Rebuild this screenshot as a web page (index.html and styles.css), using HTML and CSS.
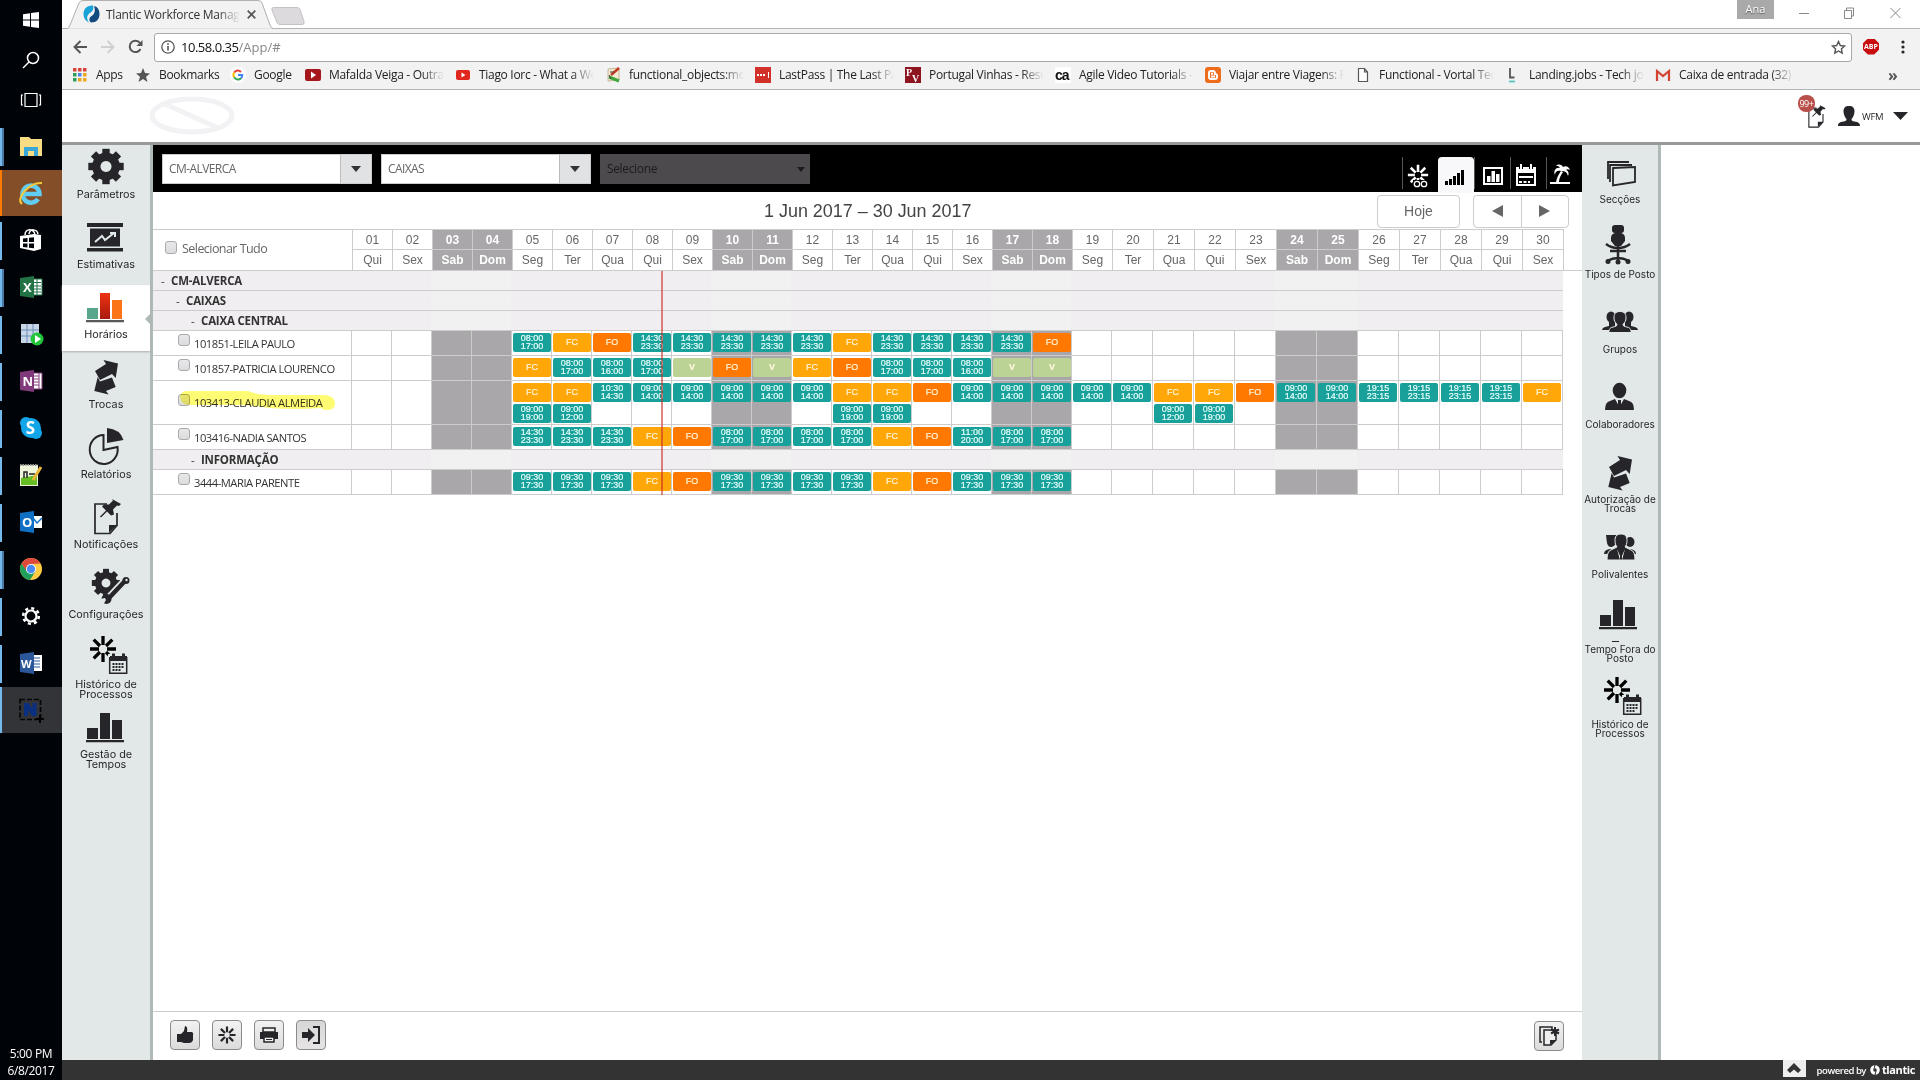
FILE: index.html
```html
<!DOCTYPE html>
<html lang="pt">
<head>
<meta charset="utf-8">
<title>Tlantic Workforce Management</title>
<link rel="stylesheet" href="styles.css">
</head>
<body>
<svg class="defs" width="0" height="0">
  <defs>
    <g id="gear"><path fill-rule="evenodd" d="M0-14a14 14 0 1 0 .01 0zM0-5.500a5.500 5.500 0 1 1-.01 0z"/><g id="teeth"><rect x="-3.700" y="-17.700" width="7.400" height="6"/><rect x="-3.700" y="11.700" width="7.400" height="6"/><rect x="-17.700" y="-3.700" width="6" height="7.400"/><rect x="11.700" y="-3.700" width="6" height="7.400"/></g><use href="#teeth" transform="rotate(45)"/></g>
    <g id="burst" stroke="currentColor" stroke-width="3.300"><path d="M0-4V-13M0 4V13M-4 0H-13M4 0H13M-3-3L-9.300-9.300M3-3L9.300-9.300M-3 3L-9.300 9.300M3 3L9.300 9.300"/></g>
    <g id="swap"><path d="M19.500 5 34 8.500 31.700 23 28 19 16 25 11 16 22 9zM10.300 36 13.700 22 16 26.500 28 22.500 31.700 32 22 36 24.600 39.500z"/></g>
    <g id="bars"><path d="M3 23h11v11H3zM16 8h10v26H16zM28 15h10v19H28zM2 35h38v2.300H2z"/></g>
    <g id="history"><use href="#burst" x="19" y="14" color="#000"/><path fill="#e2e8e8" d="M24 19h20v21H24z"/><path d="M26 21h17v5H26zM28 18.500h3v4h-3zM38 18.500h3v4h-3z"/><path fill="none" stroke="currentColor" stroke-width="1.500" d="M25.700 22.700h17v15.500h-17z"/><path stroke="currentColor" stroke-width="2.200" stroke-dasharray="2 1" d="M28.500 29h12M28.500 32h12M28.500 35h9"/></g>
    <g id="note"><path fill="none" stroke="currentColor" stroke-width="1.700" d="M23 9H11v29.500h15l7-8V18"/><path d="M25 38v-8h8zM28 4l9 5-2 2-2-.5-4 4 1 5-3 1-4-4-6 6-1-1 6-6-4-4 2-2 5 0 4-4z"/></g>
    <g id="caret"><path d="M0 0h10l-5 6z"/></g>
  </defs>
</svg>

<div class="desktop">
  <aside class="taskbar">
    <div class="sys"><svg width="18" height="18" viewBox="0 0 18 18" fill="#fff"><path d="M1 3.300 8 2.300V8.500H1zM9 2.100 17 1V8.500H9zM1 9.500h7v6.200L1 14.700zM9 9.500h8V17L9 15.900z"/></svg></div>
    <div class="sys"><svg width="18" height="18" viewBox="0 0 18 18" fill="none" stroke="#fff" stroke-width="1.500"><circle cx="11" cy="7" r="5.500"/><path d="M7 11 1 17"/></svg></div>
    <div class="sys"><svg width="22" height="18" viewBox="0 0 22 18" fill="none" stroke="#fff" stroke-width="1.200"><path d="M5 2.500h12v13H5zM3 4H1.500v10H3M19 4h1.500v10H19"/></svg></div>
    <div class="tasks">
      <div class="task multi"><svg width="28" height="28" viewBox="0 0 28 28"><path fill="#f8dc84" d="M3 5h9l2 2h11v17H3z"/><path fill="#3ba7d8" d="M7 24v-9h14v9h-4v-5h-6v5z"/></svg></div>
      <div class="task alert"><svg width="28" height="28" viewBox="0 0 28 28"><path fill="none" stroke="#62cdf3" stroke-width="4.500" d="M6 15h16.500A8.500 8.500 0 1 0 21 20"/><path fill="none" stroke="#f5c73b" stroke-width="2" d="M5 25C-2 20 12 3 25 4"/></svg></div>
      <div class="task"><svg width="28" height="28" viewBox="0 0 28 28"><path fill="#fff" d="M3 10l14-2 7 1v14l-7 2L3 22z"/><path fill="none" stroke="#fff" stroke-width="1.500" d="M8 9c0-7 9-7 10 0M12 8c1-6 8-5 9 0"/><path fill="#000308" d="M6 12.500l4.500-.5v4H6zM12 11.800l5-.5v4.700h-5zM6 17.500h4.500v4L6 21zM12 17.500h5v4.800l-5-.6z"/></svg></div>
      <div class="task multi"><svg class="office" width="28" height="28" viewBox="0 0 28 28"><path fill="#fff" stroke="#217346" d="M14 6h11v16H14z"/><path stroke="#217346" d="M15 9.500h9M15 13h9M15 16h9M15 19h9M20 6v16"/><path fill="#217346" d="M3 5l14-2v22L3 23z"/><text x="6" y="19">X</text></svg></div>
      <div class="task"><svg width="28" height="28" viewBox="0 0 28 28"><path fill="#c8d7e8" d="M4 4h18v19H4z"/><path stroke="#6c8db5" d="M4 10h18M4 16h18M10 4v19M16 4v19"/><circle cx="20" cy="19" r="6.500" fill="#22c43a"/><path fill="#fff" d="M18 15l6 4-6 4z"/></svg></div>
      <div class="task"><svg class="office" width="28" height="28" viewBox="0 0 28 28"><path fill="#fff" stroke="#80397b" d="M14 6h11v16H14z"/><path stroke="#80397b" d="M15 9h7M15 12h7M15 15h7M15 18h7M22 6v16"/><path fill="#80397b" d="M3 5l14-2v22L3 23z"/><text x="5.500" y="19">N</text></svg></div>
      <div class="task"><svg class="skype" width="28" height="28" viewBox="0 0 28 28"><circle cx="14" cy="14" r="10" fill="#12a5e8"/><circle cx="9" cy="9" r="6" fill="#12a5e8"/><circle cx="19" cy="19" r="6" fill="#12a5e8"/><text x="8.700" y="20">S</text></svg></div>
      <div class="task"><svg width="28" height="28" viewBox="0 0 28 28"><path fill="#eef5da" d="M3 4h18v21H3z"/><path fill="#66bd24" d="M4 17l16-3v10H4z"/><path fill="none" stroke="#222" stroke-width="1.500" d="M7 17v-6h3v6M12 13h6"/><path stroke="#999" stroke-dasharray="1.500 1" stroke-width="2" d="M3 4h18"/><path stroke="#e8b53a" stroke-width="3" d="M24 6l-8 13"/></svg></div>
      <div class="task"><svg class="office" width="28" height="28" viewBox="0 0 28 28"><path fill="#fff" d="M14 8h11v12H14z"/><path fill="none" stroke="#0f70c5" stroke-width="1.500" d="M16 10l4 5 5-5"/><path fill="#0f70c5" d="M3 5l14-2v22L3 23z"/><text x="5" y="19">O</text></svg></div>
      <div class="task multi"><svg width="28" height="28" viewBox="0 0 28 28"><circle cx="14" cy="14" r="11" fill="#fc4"/><path fill="#df4a3c" d="M4.500 8.500A11 11 0 0 1 23.500 8.500L14 9 9 16z"/><path fill="#20a05b" d="M4.500 8.500A11 11 0 0 0 13 25L18.500 16.500 9.500 16z"/><circle cx="14" cy="14" r="5" fill="#fff"/><circle cx="14" cy="14" r="4.200" fill="#4c8bf5"/></svg></div>
      <div class="task"><svg width="28" height="28" viewBox="0 0 28 28" fill="none" stroke="#fff"><circle cx="14" cy="14" r="5.500" stroke-width="2.200"/><circle cx="14" cy="14" r="7.800" stroke-width="2.600" stroke-dasharray="3.060 3.060"/></svg></div>
      <div class="task"><svg class="office" width="28" height="28" viewBox="0 0 28 28"><path fill="#fff" d="M14 6h11v16H14z"/><path stroke="#2b579a" d="M15 9h8M15 12h8M15 15h8M15 18h8"/><path fill="#2b579a" d="M3 5l14-2v22L3 23z"/><text x="4" y="19" class="small">W</text></svg></div>
      <div class="task current"><svg width="28" height="28" viewBox="0 0 28 28"><path fill="none" stroke="#050505" stroke-width="1.700" stroke-dasharray="5 2" d="M3 3.500h20.500v20H3z"/><path fill="#0b2f80" d="M7 20V7h4.500l4 6V7h4v13H15l-4-6v6z"/><path stroke="#000" stroke-width="2" d="M23 19v8M19 23h8"/></svg></div>
    </div>
    <div class="clock"><span>5:00 PM</span><span>6/8/2017</span></div>
  </aside>

  <div class="window">
    <div class="tabstrip">
      <div class="tab">
        <svg class="tab-shape" width="212" height="30" viewBox="0 0 212 30"><path fill="#f2f2f2" stroke="#b0b0b0" d="M0 28.500h5.500Q7 28 8 25L17 3Q18 .5 21 .5H196Q199 .5 200 3L208 25Q209 28 211 28.500"/><path stroke="#f2f2f2" stroke-width="2" d="M6 29.500h204"/></svg>
        <svg class="favicon" width="17" height="18" viewBox="0 0 17 18"><path fill="#17a3d9" d="M10 .5C4 0 .5 4 .5 9c0 4 2 7 5.500 8.500C3 13 4 10 7 8c3-2 4-4 3-7.500z"/><path fill="#124a80" d="M11 1c4 1 5.500 4 5.500 8 0 5-3 8.500-8.500 8.500-2.500-2-2-5 .5-6.500C12 9 12.500 5 11 1z"/></svg>
        <span class="tab-title">Tlantic Workforce Manag</span>
        <svg class="tab-x" width="9" height="9" viewBox="0 0 9 9"><path stroke="#555" stroke-width="1.700" d="M.7.700l7.600 7.600M8.300.700.7 8.300"/></svg>
      </div>
      <svg class="newtab" width="36" height="19" viewBox="0 0 36 19"><path fill="#dcdadc" stroke="#c4c2c4" d="M3 .5h23q2 0 3 2l4 12q1 3-2 3H9q-2 0-3-2L1 3Q0 .5 3 .5z"/></svg>
      <span class="user-badge">Ana</span>
      <svg class="winbtns" width="104" height="12" viewBox="0 0 104 12" fill="none" stroke="#888"><path d="M1 6.500h10M46.500 3.500h7v8h-7zM48.500 3V1h7v8h-2M92.500 1l10 10M102.500 1l-10 10"/></svg>
    </div>
    <div class="toolbar">
      <svg width="14" height="14" viewBox="0 0 14 14" fill="none" stroke="#555" stroke-width="1.900"><path d="M14 7H1.500M7.500 1 1.500 7l6 6"/></svg>
      <svg class="fwd" width="14" height="14" viewBox="0 0 14 14" fill="none" stroke="#d0d0d0" stroke-width="1.900"><path d="M0 7h12.500M6.500 1l6 6-6 6"/></svg>
      <svg class="reload" width="15" height="15" viewBox="0 0 15 15"><path fill="none" stroke="#555" stroke-width="2" d="M12.500 10A5.700 5.700 0 1 1 12 4"/><path fill="#555" d="M14.500 1v6h-6z"/></svg>
      <div class="omnibox">
        <svg width="14" height="14" viewBox="0 0 14 14"><circle cx="7" cy="7" r="6.200" fill="none" stroke="#555" stroke-width="1.300"/><path stroke="#555" stroke-width="1.600" d="M7 6v4.500M7 3.200v1.600"/></svg>
        <span class="url">10.58.0.35<i>/App/#</i></span>
        <svg class="star" width="15" height="15" viewBox="0 0 15 15"><path fill="none" stroke="#555" stroke-width="1.400" d="M7.500 1.500l1.800 4 4.200.5-3.100 2.900.8 4.300-3.700-2.200-3.700 2.200.8-4.300L1.500 6l4.200-.5z"/></svg>
      </div>
      <span class="abp">ABP</span>
      <svg class="dots" width="4" height="14" viewBox="0 0 4 14" fill="#555"><circle cx="2" cy="2" r="1.600"/><circle cx="2" cy="7" r="1.600"/><circle cx="2" cy="12" r="1.600"/></svg>
    </div>
    <div class="bookmarks">
      <div class="bm apps"><svg width="16" height="16" viewBox="0 0 16 16"><path fill="#d9453d" d="M1 1h3.500v3.500H1zM6 1h3.500v3.500H6zM11 1h3.500v3.500H11z"/><path fill="#2e9e5b" d="M1 6h3.500v3.500H1zM1 11h3.500v3.500H1z"/><path fill="#4a86e8" d="M6 6h3.500v3.500H6z"/><path fill="#e9a820" d="M11 6h3.500v3.500H11zM6 11h3.500v3.500H6zM11 11h3.500v3.500H11z"/></svg><span>Apps</span></div>
      <div class="bm marks"><svg width="16" height="16" viewBox="0 0 16 16"><path fill="#555" d="M8 1l2 5 5 .4-4 3.400L12.500 15 8 12l-4.500 3L5 9.800 1 6.400 6 6z"/></svg><span>Bookmarks</span></div>
      <div class="bm goog"><svg width="16" height="16" viewBox="0 0 16 16" fill="none" stroke-width="2"><circle cx="8" cy="8" r="8" fill="#fff"/><path stroke="#e94335" d="M4.200 5.500A4.300 4.300 0 0 1 11 5"/><path stroke="#fbbc05" d="M4.200 10.300a4.300 4.300 0 0 1 0-4.800"/><path stroke="#34a853" d="M11 11.200a4.300 4.300 0 0 1-6.800-1"/><path stroke="#4285f4" d="M8 8h4.300a4 4 0 0 1-1.300 3.200"/></svg><span>Google</span></div>
      <div class="bm"><svg width="16" height="16" viewBox="0 0 16 16"><rect y="2" width="16" height="12" rx="2" fill="#a5171b"/><path fill="#fff" d="M6 4.500l5 3.500-5 3.500z"/></svg><span>Mafalda Veiga - Outra</span></div>
      <div class="bm"><svg width="16" height="16" viewBox="0 0 16 16"><rect x="1" y="3" width="14" height="10" rx="2" fill="#e1261d"/><path fill="#fff" d="M6.500 5.500l4 2.500-4 2.500z"/></svg><span>Tiago Iorc - What a Wo</span></div>
      <div class="bm"><svg width="16" height="16" viewBox="0 0 16 16"><path fill="#f4ead0" stroke="#b9ab87" stroke-width=".8" d="M3 2l11-1v12L3 14z"/><path stroke="#c23a24" stroke-width="2.500" d="M14 1L6 8"/><path stroke="#3fa63c" stroke-width="3" d="M4 10l10 4"/><path stroke="#444" d="M5 5h4M4 8l2 4"/></svg><span>functional_objects:mod</span></div>
      <div class="bm"><svg width="16" height="16" viewBox="0 0 16 16"><path fill="#d2312a" d="M0 0h16v16H0z"/><path stroke="#fff" stroke-width="2" stroke-dasharray="2 1" d="M2 8h9"/><path stroke="#fff" d="M13.500 5v6"/></svg><span>LastPass | The Last Pas</span></div>
      <div class="bm"><svg class="pv" width="16" height="16" viewBox="0 0 16 16"><path fill="#8e1420" d="M0 0h16v16H0z"/><text x="1" y="9">P</text><text x="7" y="15">V</text></svg><span>Portugal Vinhas - Resu</span></div>
      <div class="bm"><svg class="ca" width="16" height="16" viewBox="0 0 16 16"><path fill="#fff" d="M0 0h16v16H0z"/><text x="0" y="13">ca</text></svg><span>Agile Video Tutorials -</span></div>
      <div class="bm"><svg width="16" height="16" viewBox="0 0 16 16"><rect width="16" height="16" rx="3" fill="#ee6c1c"/><path fill="none" stroke="#fff" stroke-width="2" d="M4 10V6q0-2 2-2h2q2 0 2 3 2 0 2 1.500V10q0 2-2 2H6q-2 0-2-2zM6 6.800h2M6 9.500h4"/></svg><span>Viajar entre Viagens: R</span></div>
      <div class="bm"><svg width="16" height="16" viewBox="0 0 16 16"><path fill="#fff" stroke="#555" stroke-width="1.200" d="M3.500 1.500h6l3 3.500v9.500h-9zM9.500 1.500V5h3"/></svg><span>Functional - Vortal Tec</span></div>
      <div class="bm"><svg width="16" height="16" viewBox="0 0 16 16" fill="none" stroke-width="1.800"><path stroke="#555" d="M5 1v9.500h4.500"/><path stroke="#58c4c4" d="M4 14.500h6"/></svg><span>Landing.jobs - Tech job</span></div>
      <div class="bm"><svg width="16" height="16" viewBox="0 0 16 16"><path fill="#ececec" d="M1 3h14v11H1z"/><path fill="none" stroke="#d24332" stroke-width="2.200" d="M2 14V4l6 5 6-5v10"/></svg><span>Caixa de entrada (32)</span></div>
      <b class="more">»</b>
    </div>

    <header class="apphead">
      <svg class="logo" width="90" height="42" viewBox="0 0 90 42" fill="none" stroke="#f2f2f5"><ellipse cx="45" cy="20.500" rx="40" ry="16.500" stroke-width="5"/><path stroke-width="5" d="M18 9l53 24"/></svg>
      <div class="session">
        <div class="notes"><svg width="27" height="27" viewBox="5 1 42 42"><use href="#note"/></svg><span class="count">99+</span></div>
        <svg class="person" width="22" height="20" viewBox="0 0 22 20"><path d="M11 0c4 0 5.500 2 5.500 5.500S14.500 12 13.500 13c0 2 1 2 3 2.500 4 .8 5.500 1.500 5.500 4.500H0c0-3 1.500-3.700 5.500-4.500 2-.5 3-.5 3-2.500C7.500 12 5.500 9 5.500 5.500S7 0 11 0z"/></svg>
        <span class="who">WFM</span>
        <svg class="drop" width="15" height="8" viewBox="0 0 15 8"><path d="M0 0h15L7.500 8z"/></svg>
      </div>
    </header>

    <div class="appbody">
      <nav class="side left">
        <a><svg width="44" height="42"><use href="#gear" x="22" y="21.500"/></svg><span>Parâmetros</span></a>
        <a><svg width="44" height="42"><path d="M3 8h36v4H3zM3 33h36v3.500H3zM6 13.500h30V31.500H6z"/><path fill="none" stroke="#e2e8e8" stroke-width="2" d="M11 27l7-6 3 4 9-7M26 18h5v4"/></svg><span>Estimativas</span></a>
        <a class="on"><svg width="44" height="42"><defs><linearGradient id="r" x2="0" y2="1"><stop stop-color="#ee3312"/><stop offset="1" stop-color="#a81a0e"/></linearGradient></defs><path fill="#58a58c" d="M3 23h11v11H3z"/><path fill="url(#r)" d="M16 8h10v26H16z"/><path fill="#fb7418" d="M28 15h10v19H28z"/><path fill="#58595b" d="M2 35h38v2.300H2z"/></svg><span>Horários</span></a>
        <a><svg width="44" height="42"><use href="#swap"/></svg><span>Trocas</span></a>
        <a><svg width="44" height="42"><path d="M23 3Q36 4 39.500 15L23 18z"/><path fill="none" stroke="currentColor" stroke-width="2" d="M19.500 10A14 14.500 0 1 0 33.500 22L19.500 25z"/></svg><span>Relatórios</span></a>
        <a><svg width="44" height="42"><use href="#note"/></svg><span>Notificações</span></a>
        <a><svg width="44" height="42"><use href="#gear" transform="translate(22 18) scale(.8)"/><path fill="none" stroke="#e2e8e8" stroke-width="8" d="M24 34L41 16"/><path fill="none" stroke="currentColor" stroke-width="4.500" d="M24 34L41 16"/><circle cx="22.500" cy="34" r="5"/><circle cx="42" cy="15.500" r="3.500"/><circle cx="42.500" cy="15" r="1.200" fill="#e2e8e8"/><path fill="#e2e8e8" d="M16 34l5-1 1 2-3 5z"/></svg><span>Configurações</span></a>
        <a><svg width="44" height="42"><use href="#history"/></svg><span>Histórico de<br>Processos</span></a>
        <a><svg width="44" height="42"><use href="#bars"/></svg><span>Gestão de<br>Tempos</span></a>
      </nav>

      <main>
        <div class="filterbar">
          <div class="select"><span>CM-ALVERCA</span><i><svg width="10" height="6"><use href="#caret"/></svg></i></div>
          <div class="select"><span>CAIXAS</span><i><svg width="10" height="6"><use href="#caret"/></svg></i></div>
          <div class="select off"><span>Selecione</span><svg width="8" height="5" viewBox="0 0 10 6"><use href="#caret"/></svg></div>
          <div class="modes">
            <i><svg width="22" height="24"><use href="#burst" transform="translate(11 11) scale(.78)"/><path fill="#000" d="M6 16h16v8H6z"/><circle cx="10" cy="20" r="2.700" fill="none" stroke="currentColor" stroke-width="1.300"/><circle cx="17" cy="20" r="2.700" fill="none" stroke="currentColor" stroke-width="1.300"/></svg></i>
            <i class="on"><svg width="22" height="24"><path d="M2 17h3v4H2zM6 15h3v6H6zM10 12h3v9h-3zM14 9h3v12h-3zM18 6h3v15h-3z"/></svg></i>
            <i class="chart"><svg width="22" height="24"><path fill="none" stroke="currentColor" stroke-width="2" d="M2 4h18v16H2z"/><path d="M5 12h3.500v6H5zM9.500 7h3.500v11H9.500zM14 10h3.500v8H14z"/></svg></i>
            <i><svg width="22" height="24"><path fill="none" stroke="currentColor" stroke-width="2" d="M2 4h18v17H2z"/><path d="M1 3h20v6H1zM4 12h14v2H4zM4 17h3v2H4zM8.500 17h3v2h-3zM13 17h2v2h-2z"/><path stroke="#000" stroke-width="4" d="M6 0v5M16 0v5"/><path stroke="currentColor" stroke-width="2" d="M6 0v5M16 0v5"/></svg></i>
            <i class="leave"><svg width="22" height="24"><path d="M1 19h20v2H1zM7 19c1-5 3-8 5-11l2 1c-2 3-4 6-4 10z"/><path d="M12 8C8 7 6 9 6 12c-2-4 1-8 5-7-1-2-2-2-4-2 3-3 6-1 7 1 3-2 6 0 7 3-2-1-3-1-4 0 3 1 3 4 2 6-1-4-3-5-7-5z"/></svg></i>
          </div>
        </div>

        <div class="caltop">
          <h2>1 Jun 2017 – 30 Jun 2017</h2>
          <button class="btn today">Hoje</button>
          <div class="btn pager"><span><svg width="11" height="12"><path d="M11 0v12L0 6z"/></svg></span><span><svg width="11" height="12"><path d="M0 0v12l11-6z"/></svg></span></div>
        </div>

        <section class="cal">
          <div class="calhead">
            <div class="all"><i class="cb"></i><span>Selecionar Tudo</span></div>
            <div class="days" id="days"></div>
          </div>
          <div class="calbody" id="rows"></div>
          <i class="now"></i>
          <svg class="marker" width="160" height="26" viewBox="0 0 160 26"><path fill="#fff700" d="M9 4H71Q80 8 98 8H146Q157 8 158 16 158 23 151 23 146 23 144 21 118 23 92 21 78 18 60 18L13 18Q4 18 3 10 4 4 9 4z"/></svg>
        </section>

        <div class="actions">
          <button><svg width="20" height="20"><path d="M2 9h4v8H2zM6 9l3-3 1-5q3 0 2 6h5q2 1 1 3v5q-1 3-4 3H9l-3-1z"/></svg></button>
          <button><svg width="20" height="20"><use href="#burst" transform="translate(10 10) scale(.66)"/></svg></button>
          <button><svg width="20" height="20"><path d="M1 7h18v7H1z"/><path fill="#eee" stroke="currentColor" stroke-width="1.500" d="M4 3h12v4H4zM5 12h10v5H5z"/><path stroke="currentColor" d="M7 14.500h6"/></svg></button>
          <button class="dark"><svg width="20" height="20"><path d="M1 7h6V3l7 7-7 7v-4H1z"/><path fill="none" stroke="currentColor" stroke-width="2" d="M12 2h6v16h-6"/></svg></button>
          <button class="last"><svg width="22" height="22"><path fill="none" stroke="currentColor" stroke-width="1.500" d="M4 17H2V2h12v2"/><path fill="#eee" stroke="currentColor" stroke-width="1.500" d="M6 5h12v10l-5 5H6z"/><path d="M12 20v-5h6z"/><path stroke="currentColor" stroke-width="2" d="M17 2v9M13 4.500l8 4M21 4.500l-8 4"/></svg></button>
        </div>
      </main>

      <nav class="side right">
        <a><svg width="44" height="48" fill="none" stroke="currentColor" stroke-width="1.800"><path d="M10 34V17h21M12 37V20h22M15 23l22-1v15l-22 3.500z"/></svg><span>Secções</span></a>
        <a><svg width="44" height="48"><rect x="14" y="5" width="12" height="8" rx="3"/><path d="M13 18q0-4 4-5h6q4 1 4 5v3l-4 5h-6l-4-5z"/><path fill="none" stroke="currentColor" stroke-width="2.500" d="M8 24q5 4 12 4t12-4M20 26v14M9 41q11-6 22 0M12 31h16"/><circle cx="10" cy="41.500" r="2.500"/><circle cx="20" cy="42" r="2.500"/><circle cx="30" cy="41.500" r="2.500"/></svg><span>Tipos de Posto</span></a>
        <a><svg width="44" height="48"><g id="pal"><ellipse cx="13" cy="22" rx="4.500" ry="5.500"/><path d="M4 35q0-3 7-4V26h6v9z"/></g><use href="#pal" transform="translate(44 0) scale(-1 1)"/><path stroke="#e2e8e8" d="M22 16.500c5 0 6 3 6 6.500 0 3-1 4-3 6.500 0 2 2 2 4 2.500 4 1 4 3 4 5.500H11c0-2.500 0-4.500 4-5.500 2-.5 4-.5 4-2.500-2-2.500-3-3.500-3-6.500 0-3.500 1-6.500 6-6.500z"/></svg><span>Grupos</span></a>
        <a><svg width="44" height="48"><ellipse cx="21.500" cy="20.500" rx="6.800" ry="7.800"/><path d="M7 40q0-8 5-9l5-2 4.500 8 4.500-8 5 2q5 1 5 9zM20 30h3v7h-3z"/></svg><span>Colaboradores</span></a>
        <a><svg width="44" height="48"><use href="#swap" y="6"/></svg><span>Autorização de<br>Trocas</span></a>
        <a><svg width="44" height="48"><path d="M8 15h10v8q-2 4-5 4t-4-4zM6 34q0-5 8-5v5zM38 34q0-5-8-5v5z"/><ellipse cx="32" cy="22" rx="4.500" ry="5"/><path stroke="#e2e8e8" d="M23 14c5 0 6 3 6 6.500s-1 5-2 6.500l6 3q4 1 4 10H9q0-9 4-10l6-3c-1-1.500-2-3-2-6.500S18 14 23 14z"/><path fill="#fff" d="M19 29l3 7v4zM27 29l-3 7v4z"/></svg><span>Polivalentes</span></a>
        <a><svg width="44" height="48"><use href="#bars" x="-1" y="-3"/><path d="M14 46h7v1h-7z"/></svg><span>Tempo Fora do<br>Posto</span></a>
        <a><svg width="44" height="48"><use href="#history" y="6"/></svg><span>Histórico de<br>Processos</span></a>
      </nav>
    </div>

    <footer>
      <i class="up"><svg width="14" height="11"><path fill="#333" d="M7 0l7 7-3 3-4-3.500L3 10 0 7z"/></svg></i>
      <span class="by">powered by</span>
      <svg width="10" height="10" viewBox="0 0 10 10"><circle cx="5" cy="5" r="3.300" fill="none" stroke="#fff" stroke-width="3"/><path stroke="#333" d="M5 0 4 4M5 10l1-4"/></svg>
      <b>tlantic</b>
    </footer>
  </div>
</div>
<script src="app.js"></script>
</body>
</html>
```
FILE: styles.css
```css
* { box-sizing: border-box; }
body { margin: 0; font-family: "Open Sans", "Noto Sans", sans-serif; background: #fff; color: #26262a; }
svg { display: block; fill: currentColor; overflow: visible; flex: none; }
svg[fill="none"] { fill: none; }
svg[fill="#fff"] { fill: #fff; }
i { font-style: normal; }
.defs { position: absolute; }
button { font: inherit; padding: 0; color: inherit; }
.desktop { display: flex; width: 1920px; height: 1080px; overflow: hidden; }

/* Windows taskbar */
.taskbar { width: 62px; background: #000308; display: flex; flex-direction: column; flex: none; }
.sys { height: 40px; display: flex; align-items: center; justify-content: center; }
.tasks { margin-top: 3px; }
.task { height: 46px; margin-bottom: 1px; display: flex; align-items: center; padding-left: 17px; background: linear-gradient(#76b9ed, #76b9ed) 0 5px / 2px 38px no-repeat; }
.task.multi { background: linear-gradient(90deg, #76b9ed 2px, #4a7ba6 2px) 0 5px / 4px 38px no-repeat; }
.task.alert { background: linear-gradient(90deg, #ff7a00 2px, #844e28 2px); }
.task.current { background: linear-gradient(90deg, #76b9ed 2px, #323438 2px); }
.task text { fill: #fff; font: bold 13px "Open Sans", sans-serif; }
.task text.small { font-size: 11px; }
.task .skype text { font-size: 17px; }
.clock { margin-top: auto; height: 35px; color: #fff; font-size: 12px; line-height: 17px; display: flex; flex-direction: column; align-items: center; letter-spacing: -.35px; }
.clock span { white-space: nowrap; }

/* Browser chrome */
.window { flex: 1; display: flex; flex-direction: column; min-width: 0; }
.tabstrip { height: 29px; border-bottom: 1px solid #b5b5b5; display: flex; flex: none; color: #333; font-size: 12px; padding-right: 18px; }
.tab { width: 212px; height: 29px; position: relative; display: flex; align-items: center; padding-left: 21px; padding-bottom: 1px; margin-bottom: -1px; }
.tab-shape { position: absolute; left: 0; top: 0; }
.favicon, .tab-title, .tab-x { position: relative; }
.tab-title { margin-left: 6px; width: 134px; white-space: nowrap; overflow: hidden; letter-spacing: -.24px; -webkit-mask: linear-gradient(90deg, #000 112px, transparent 134px); }
.tab-x { margin-left: 7px; }
.newtab { margin: 7px 0 0 -3px; }
.user-badge { margin-left: auto; height: 19px; width: 37px; background: #a9a9a9; color: #fff; text-align: center; font-size: 11px; line-height: 18px; text-shadow: 0 1px 1px #555; }
.winbtns { margin: 7px 0 0 24px; }
.toolbar { height: 35px; background: #f2f2f2; display: flex; align-items: center; padding: 0 15px 0 11px; flex: none; }
.fwd { margin-left: 14px; }
.reload { margin-left: 13px; }
.omnibox { margin-left: 11px; width: 1698px; height: 29px; margin-top: 1px; border: 1px solid #a8a8a8; border-radius: 3px; background: #fff; display: flex; align-items: center; padding: 0 5px 0 6px; flex: none; }
.url { margin-left: 6px; font-size: 13px; color: #111; letter-spacing: -.48px; }
.url i { color: #888; letter-spacing: 0; }
.star { margin-left: auto; }
.abp { margin-left: 11px; width: 16px; height: 16px; background: #c70d0d; color: #fff; font-size: 7px; font-weight: 700; line-height: 16px; text-align: center; flex: none; clip-path: polygon(30% 0, 70% 0, 100% 30%, 100% 70%, 70% 100%, 30% 100%, 0 70%, 0 30%); }
.dots { margin-left: 22px; }
.bookmarks { height: 26px; background: #f2f2f2; border-bottom: 1px solid #b5b5b5; display: flex; align-items: center; padding: 0 0 4px 10px; font-size: 12px; color: #222; flex: none; }
.bm { width: 150px; display: flex; align-items: center; flex: none; }
.bm span { margin-left: 8px; width: 115px; white-space: nowrap; overflow: hidden; letter-spacing: -.3px; -webkit-mask: linear-gradient(90deg, #000 92px, transparent 115px); }
.bm.apps { width: 63px; }
.bm.marks { width: 95px; }
.bm.goog { width: 75px; }
.bm.apps span, .bm.marks span, .bm.goog span { width: auto; -webkit-mask: none; }
.pv text { fill: #fff; font: bold 10px "Liberation Serif", serif; }
.ca text { fill: #111; font: bold 14px "Liberation Sans", sans-serif; letter-spacing: -1px; }
.more { margin-left: 83px; font-size: 16px; color: #555; }

/* Application header */
.apphead { height: 55px; border-bottom: 3px solid #999; display: flex; align-items: center; padding: 0 12px 0 85px; flex: none; }
.session { margin-left: auto; display: flex; align-items: center; }
.notes { position: relative; }
.count { position: absolute; left: -7px; top: -8px; width: 17px; height: 17px; border-radius: 8px; background: #b9504c; color: #fff; font-size: 9px; line-height: 17px; text-align: center; letter-spacing: -.4px; }
.person { margin-left: 6px; }
.who { margin-left: 2px; width: 22px; font-size: 9.5px; letter-spacing: -.3px; }
.drop { margin-left: 9px; }
.appbody { flex: 1; display: flex; min-height: 0; }

/* Side navigation */
.side { background: #e2e8e8; border-right: 3px solid #afbab8; flex: none; }
.side.left { width: 91px; }
.side.right { width: 79px; }
.side a { display: flex; flex-direction: column; align-items: center; height: 70px; font: 10.8px/10px Inter, sans-serif; text-align: center; white-space: nowrap; }
.side a span { margin-top: 3px; }
.side.right a { height: 75px; font-size: 10px; line-height: 9px; }
.side.right a span { margin-top: 2px; }
.side a.on { height: 66px; margin-bottom: 4px; background: #fff; box-shadow: 0 1px 2px #aaa; position: relative; }
.side a.on::after { content: ""; position: absolute; right: 0; top: 29px; border: 5px solid transparent; border-right-color: #afbab8; border-left: 0; }

/* Main column */
main { width: 1429px; display: flex; flex-direction: column; flex: none; }
.filterbar { height: 47px; background: #000; display: flex; padding: 9px 0 0 9px; gap: 9px; flex: none; }
.select { width: 210px; height: 30px; background: #fff; border: 1px solid #ccc; color: #666; display: flex; align-items: center; font-size: 12px; padding-left: 6px; letter-spacing: -.58px; }
.select span { padding-bottom: 2px; }
.select i { margin-left: auto; width: 31px; height: 28px; background: #e0e2e4; border-left: 1px solid #bbb; display: flex; align-items: center; justify-content: center; color: #333; }
.select.off { background: #4c4a4d; border-color: #4c4a4d; color: #1c1c1e; padding-right: 4px; justify-content: space-between; letter-spacing: -.35px; }
.modes { margin: 3px 0 0 auto; display: flex; color: #fff; }
.modes i { width: 36px; height: 32px; border-left: 1px solid #555; padding: 7px 0 0 4px; }
.modes i.on { height: 36px; background: #f8f7fa; color: #000; border-radius: 4px 4px 0 0; border: 0; padding-left: 5px; }
.modes i.chart { padding-left: 7px; }
.modes i.leave { padding: 6px 0 0 2px; }
.caltop { height: 37px; display: flex; align-items: flex-start; padding: 3px 13px 0 0; flex: none; }
h2 { margin: 5px 0 0 611px; font: 17.95px/22px "Liberation Sans", sans-serif; color: #444; white-space: nowrap; }
.btn { height: 33px; border: 1px solid #ccc; border-radius: 4px; background: #fff; color: #666; font: 14px "Liberation Sans", sans-serif; padding-bottom: 2px; }
.today { width: 83px; margin-left: auto; }
.pager { width: 96px; margin-left: 13px; display: flex; padding: 0; }
.pager span { flex: 1; display: flex; align-items: center; justify-content: center; padding-bottom: 1px; }
.pager span + span { border-left: 1px solid #ccc; }

.cal { position: relative; font-size: 12px; }
.calhead { display: flex; height: 42px; border-bottom: 1px solid #ccc; }
.all { width: 199px; border-top: 1px solid #ccc; display: flex; align-items: center; padding: 0 0 5px 12px; color: #666; }
.all span { margin-left: 5px; padding-top: 1px; white-space: nowrap; letter-spacing: -.55px; font-size: 12.5px; }
.cb { width: 12px; height: 13px; border: 1px solid #aaa; border-radius: 3px; background: linear-gradient(#e8e8ea, #dcdcde); flex: none; }
.days { display: flex; border-right: 1px solid #ccc; font: 12px/20px "Liberation Sans", sans-serif; color: #666; }
.day { width: 40px; border: 1px solid #ccc; border-width: 1px 0 0 1px; text-align: center; }
.day.wide, .cell.wide { width: 41px; }
.day span { display: block; height: 20px; border-bottom: 1px solid #ccc; }
.day span + span { border: 0; height: 20px; line-height: 21px; }
.day.we { background: #a9a7aa; color: #fff; font-weight: 700; border-left-color: #ccc; }
.row { width: 1410px; display: flex; border-bottom: 1px solid #ccc; min-height: 25px; }
.row .name { width: 198px; padding-left: 25px; display: flex; align-items: center; white-space: nowrap; color: #333; flex: none; font-size: 11.2px; letter-spacing: -.48px; }
.row .name .cb { margin-bottom: 6px; height: 12px; }
.row .name span { margin-left: 4px; }
.cell { width: 40px; border-left: 1px solid #ccc; padding: 2px 0 0 1px; flex: none; }
.row .cell:last-child { border-right: 1px solid #ccc; width: 42px; }
.cell.we { background: #a9a7aa; }
.row.tall { height: 44px; }
.row.group { min-height: 20px; height: 20px; background: #f0eef1; }
.row.group .cell { border: 0; padding: 0; }
.row.group .cell.we { background: #f1f1f1; }
.row.group .name { font-weight: 700; font-size: 11.5px; letter-spacing: -.2px; padding-bottom: 1px; }
.row.group .name b { font-weight: 400; width: 10px; }
.ev { width: 38px; height: 19px; margin-bottom: 2px; border-radius: 2px; background: #18a19a; color: #e9fffb; font: 9px/8px "Liberation Sans", sans-serif; text-align: center; padding-top: 1px; -webkit-text-stroke: .2px currentColor; }
.ev.FC, .ev.FO, .ev.V { line-height: 17px; color: #fff6d8; }
.ev.FC { background: #ffa708; }
.ev.FO { background: #ff7800; }
.ev.V { background: #bbd394; font-weight: 700; }
.now { position: absolute; left: 508px; top: 42px; width: 2px; height: 224px; background: rgba(200, 45, 40, .58); }
.marker { position: absolute; left: 24px; top: 158px; opacity: .55; mix-blend-mode: multiply; }

.actions { margin-top: auto; height: 49px; border-top: 1px solid #ccc; display: flex; gap: 12px; padding: 8px 18px 0 17px; flex: none; }
.actions button { width: 30px; height: 30px; border: 1px solid #8b8b8b; border-radius: 4px; background: linear-gradient(#f2f2f2, #dcdbdb); display: flex; align-items: center; justify-content: center; }
.actions .dark { background: linear-gradient(#d8d7d8, #e6e4e4); }
.actions .last { margin: 1px 0 0 auto; }

footer { height: 20px; background: #333; color: #fff; display: flex; align-items: center; justify-content: flex-end; padding-right: 5px; flex: none; font-size: 9.5px; }
.up { width: 23px; height: 17px; margin: 0 11px 3px 0; background: #eee; display: flex; align-items: center; justify-content: center; }
.by { margin-right: 4px; font-weight: 600; letter-spacing: -.45px; font-size: 9.5px; }
footer b { margin-left: 2px; font-size: 11px; line-height: 12px; letter-spacing: -.4px; }
```
FILE: app.js
```javascript
const week = ["Qui", "Sex", "Sab", "Dom", "Seg", "Ter", "Qua"];
const isWeekend = d => week[(d - 1) % 7] === "Sab" || week[(d - 1) % 7] === "Dom";
const cls = (base, d) => base + (d > 19 ? " wide" : "") + (isWeekend(d) ? " we" : "");

let head = "";
for (let d = 1; d <= 30; d++) {
  head += `<div class="${cls("day", d)}"><span>${String(d).padStart(2, "0")}</span><span>${week[(d - 1) % 7]}</span></div>`;
}
document.getElementById("days").innerHTML = head;

const A = "08:00 17:00", B = "14:30 23:30", C = "09:00 14:00", D = "09:30 17:30", E = "19:15 23:15";
// Shifts are listed from day 5 onwards.
const rows = [
  { group: "CM-ALVERCA", pad: 8 },
  { group: "CAIXAS", pad: 23 },
  { group: "CAIXA CENTRAL", pad: 38 },
  { name: "101851-LEILA PAULO", s: [A, "FC", "FO", B, B, B, B, B, "FC", B, B, B, B, "FO"] },
  { name: "101857-PATRICIA LOURENCO", s: ["FC", A, "08:00 16:00", A, "V", "FO", "V", "FC", "FO", A, A, "08:00 16:00", "V", "V"] },
  { name: "103413-CLAUDIA ALMEIDA", tall: true,
    s: ["FC", "FC", "10:30 14:30", C, C, C, C, C, "FC", "FC", "FO", C, C, C, C, C, "FC", "FC", "FO", C, C, E, E, E, E, "FC"],
    extra: { 5: "09:00 19:00", 6: "09:00 12:00", 13: "09:00 19:00", 14: "09:00 19:00", 21: "09:00 12:00", 22: "09:00 19:00" } },
  { name: "103416-NADIA SANTOS", s: [B, B, B, "FC", "FO", A, A, A, A, "FC", "FO", "11:00 20:00", A, A] },
  { group: "INFORMAÇÃO", pad: 38 },
  { name: "3444-MARIA PARENTE", s: [D, D, D, "FC", "FO", D, D, D, D, "FC", "FO", D, D, D] }
];

const shift = t => !t ? "" : t.length < 3
  ? `<div class="ev ${t}">${t}</div>`
  : `<div class="ev">${t.replace(" ", "<br>")}</div>`;

document.getElementById("rows").innerHTML = rows.map(r => {
  let cells = "";
  for (let d = 1; d <= 30; d++) {
    cells += `<div class="${cls("cell", d)}">${r.s ? shift(r.s[d - 5]) + shift(r.extra && r.extra[d]) : ""}</div>`;
  }
  return r.group
    ? `<div class="row group"><div class="name" style="padding-left:${r.pad}px"><b>-</b>${r.group}</div>${cells}</div>`
    : `<div class="row${r.tall ? " tall" : ""}"><div class="name"><i class="cb"></i><span>${r.name}</span></div>${cells}</div>`;
}).join("");
```
